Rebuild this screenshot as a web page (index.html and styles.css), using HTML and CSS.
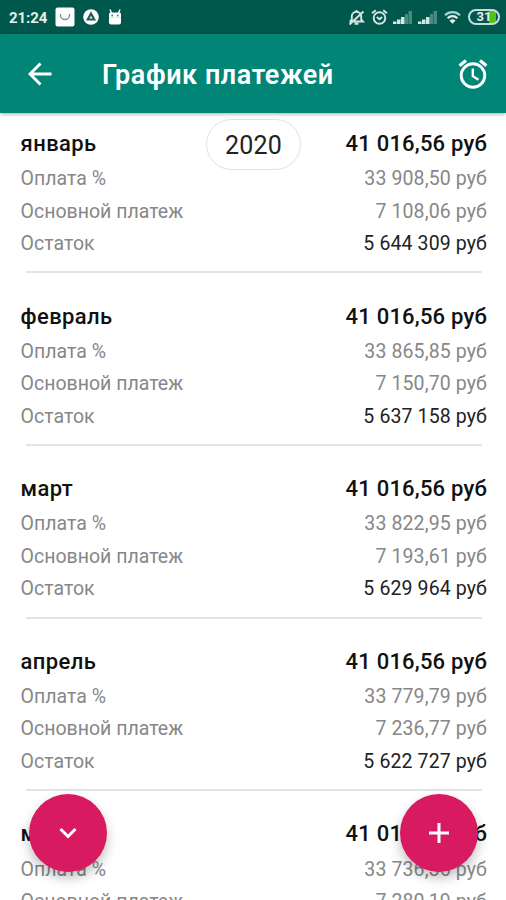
FILE: index.html
```html
<!DOCTYPE html>
<html lang="ru">
<head>
    <meta charset="UTF-8">
    <meta name="viewport" content="width=device-width, initial-scale=1.0">
    <title>График платежей</title>
    <link rel="stylesheet" href="styles.css">
</head>
<body>
    <div class="status-bar">
        <span class="time">21:24</span>
        <svg class="app-icon" width="20" height="20" viewBox="0 0 20 20">
            <rect x="0.5" y="0.5" width="19" height="19" rx="2" fill="#fff"/>
            <path d="M5.5 7v1a4.5 4.5 0 0 0 9 0v-1" fill="none" stroke="#71958f" stroke-width="1.3"/>
        </svg>
        <svg class="app-icon" width="16" height="16" viewBox="0 0 16 16">
            <circle cx="8" cy="8" r="7.8" fill="#fff"/>
            <path d="M8 4.5L11.2 10.5H4.8z" fill="none" stroke="#225f54" stroke-width="2.2"/>
        </svg>
        <svg class="app-icon" width="14" height="17" viewBox="0 0 14 17">
            <path d="M1 5c0-1 1-1.5 2-1.5h8c1 0 2 .5 2 1.5v8.5a2 2 0 0 1-2 2H3a2 2 0 0 1-2-2z" fill="#fff"/>
            <path d="M2 .5l1.5 3.5M12 .5L10.5 4" stroke="#fff" stroke-width="1.4"/>
            <path d="M1 8.5h12" stroke="#d5e2e0" stroke-width="0.6"/>
            <circle cx="4.2" cy="6.5" r="0.9" fill="#4b7e76"/>
            <circle cx="9.8" cy="6.5" r="0.9" fill="#4b7e76"/>
        </svg>
        <div class="indicators">
            <svg width="17" height="17" viewBox="0 0 17 17" fill="none" stroke="#d7e5e3" stroke-width="1.9">
                <path d="M1.5 12.5h13.5l-1.8-2.2V7.5a4.7 4.7 0 0 0-9.4 0v2.8L2 12.5M8.5 1v2M6.5 14.8h4M1.5 15.5l14-13"/>
            </svg>
            <svg class="status-alarm" width="17" height="17" viewBox="0 0 17 17" fill="none" stroke="#d7e5e3" stroke-width="1.9">
                <circle cx="8.5" cy="9" r="5.8"/>
                <path d="M1 4.2l3.8-3M16 4.2l-3.8-3M5.8 8l2.7 2.3L11.2 8"/>
            </svg>
            <svg width="19" height="14" viewBox="0 0 19 14" fill="#d7e5e3">
                <path d="M0 11.5h3.5V14H0zM4 9.5h3.5V14H4zM8 7h3.5v7H8z"/>
                <path d="M12 4h3v10h-3zM15.5 1H19v13h-3.5z" opacity="0.35"/>
            </svg>
            <svg width="19" height="14" viewBox="0 0 19 14" fill="#d7e5e3">
                <path d="M0 11.5h3.5V14H0zM4 9.5h3.5V14H4zM8 7h3.5v7H8z"/>
                <path d="M12 4h3v10h-3zM15.5 1H19v13h-3.5z" opacity="0.35"/>
            </svg>
            <svg class="wifi" width="17" height="14" viewBox="0 0 17 14" fill="none" stroke="#e4eeec" stroke-width="2.2">
                <path d="M1 5.2a10.8 10.8 0 0 1 15 0" opacity="0.8"/>
                <path d="M3.6 8.2a7 7 0 0 1 9.8 0"/>
                <path d="M5.5 10.7a4.3 4.3 0 0 1 6 0L8.5 13.8z" fill="#e4eeec" stroke="none"/>
            </svg>
            <div class="battery"><span>31</span></div>
        </div>
    </div>

    <div class="toolbar">
        <svg class="back" width="24" height="24" viewBox="0 0 24 24" fill="none" stroke="#fff" stroke-width="2.9">
            <path d="M23.5 12H2M12.5 1.5L2 12l10.5 10.5"/>
        </svg>
        <h1>График платежей</h1>
        <svg class="alarm" width="30" height="30" viewBox="0 0 30 30" fill="none" stroke="#fff">
            <circle cx="15" cy="16.5" r="11.8" stroke-width="2.9"/>
            <path d="M1.5 6.8L8 1.4M28.5 6.8L22 1.4" stroke-width="3.2"/>
            <path d="M14.8 9.5v7.7l5.7 3.5" stroke-width="2.4"/>
        </svg>
    </div>

    <div class="schedule">
        <div class="year">2020</div>
        <div class="payment">
            <div class="row total"><span>январь</span><span>41 016,56 руб</span></div>
            <div class="row"><span>Оплата %</span><span>33 908,50 руб</span></div>
            <div class="row"><span>Основной платеж</span><span>7 108,06 руб</span></div>
            <div class="row rest"><span>Остаток</span><span>5 644 309 руб</span></div>
        </div>
        <div class="payment">
            <div class="row total"><span>февраль</span><span>41 016,56 руб</span></div>
            <div class="row"><span>Оплата %</span><span>33 865,85 руб</span></div>
            <div class="row"><span>Основной платеж</span><span>7 150,70 руб</span></div>
            <div class="row rest"><span>Остаток</span><span>5 637 158 руб</span></div>
        </div>
        <div class="payment">
            <div class="row total"><span>март</span><span>41 016,56 руб</span></div>
            <div class="row"><span>Оплата %</span><span>33 822,95 руб</span></div>
            <div class="row"><span>Основной платеж</span><span>7 193,61 руб</span></div>
            <div class="row rest"><span>Остаток</span><span>5 629 964 руб</span></div>
        </div>
        <div class="payment">
            <div class="row total"><span>апрель</span><span>41 016,56 руб</span></div>
            <div class="row"><span>Оплата %</span><span>33 779,79 руб</span></div>
            <div class="row"><span>Основной платеж</span><span>7 236,77 руб</span></div>
            <div class="row rest"><span>Остаток</span><span>5 622 727 руб</span></div>
        </div>
        <div class="payment">
            <div class="row total"><span>май</span><span>41 016,56 руб</span></div>
            <div class="row"><span>Оплата %</span><span>33 736,36 руб</span></div>
            <div class="row"><span>Основной платеж</span><span>7 280,19 руб</span></div>
        </div>
    </div>

    <button class="fab fab-down">
        <svg width="18" height="12" viewBox="0 0 18 12" fill="none" stroke="#fff" stroke-width="3">
            <path d="M1.5 2L9 9.5 16.5 2"/>
        </svg>
    </button>
    <button class="fab fab-add">
        <svg width="22" height="22" viewBox="0 0 22 22" fill="none" stroke="#fff" stroke-width="3">
            <path d="M11 1v20M1 11h20"/>
        </svg>
    </button>
</body>
</html>
```
FILE: styles.css
```css
body {
    margin: 0;
    height: 900px;
    display: flex;
    flex-direction: column;
    overflow: hidden;
    position: relative;
    background-color: #fff;
    font-family: Roboto, sans-serif;
}
.status-bar {
    flex: none;
    box-sizing: border-box;
    height: 34px;
    display: flex;
    align-items: center;
    padding: 0 6px 0 9px;
    background-color: #00574b;
    color: #e6efed;
}
.time {
    width: 46px;
    padding-top: 2px;
    font-size: 15px;
    font-weight: 700;
    letter-spacing: -0.1px;
}
.app-icon {
    margin-right: 7.5px;
}
.app-icon + .app-icon + .app-icon {
    margin-left: 2px;
}
.indicators {
    display: flex;
    align-items: center;
    gap: 6px;
    margin-left: auto;
}
.status-alarm {
    margin-right: -1px;
}
.wifi {
    margin: 0 1px 0 1px;
}
.battery {
    box-sizing: border-box;
    width: 32px;
    height: 16px;
    border: 2px solid #c9dbd8;
    border-radius: 8px;
    background: linear-gradient(to right, transparent 19px, #4fc21c 19px, #4fc21c 26px, transparent 26px);
    font-size: 13px;
    font-weight: 700;
    line-height: 12px;
    text-align: center;
}
.toolbar {
    flex: none;
    box-sizing: border-box;
    height: 79px;
    display: flex;
    align-items: center;
    padding: 0 18px 0 28px;
    background-color: #008577;
    box-shadow: 0 1px 4px rgba(0, 0, 0, 0.35);
    z-index: 1;
}
h1 {
    flex: 1;
    margin: 3px 0 0 50px;
    color: #fff;
    font-size: 27px;
    font-weight: 600;
    line-height: 32px;
    letter-spacing: 0.55px;
}
.schedule {
    flex: 1;
    min-height: 0;
    overflow: hidden;
    position: relative;
}
.year {
    position: absolute;
    top: 6px;
    left: 206px;
    box-sizing: border-box;
    width: 95px;
    height: 51px;
    border: 1.5px solid #e2dfdf;
    border-radius: 26px;
    background-color: #fff;
    color: #222;
    font-size: 25px;
    line-height: 52px;
    letter-spacing: 0.2px;
    text-align: center;
}
.payment {
    padding: 13.2px 19px 0 20.6px;
}
.payment::after {
    content: "";
    display: block;
    height: 2px;
    margin: 11.9px 5px 12.1px 5.4px;
    background-color: #e4e4e4;
}
.row {
    display: flex;
    justify-content: space-between;
    height: 32.4px;
    color: #878787;
    font-size: 19.5px;
    line-height: 33px;
}
.row span:last-child {
    letter-spacing: 0.12px;
}
.total {
    height: 36.2px;
    color: #111;
    font-size: 22px;
    font-weight: 500;
    line-height: 36px;
    letter-spacing: 0.4px;
}
.total span:last-child {
    letter-spacing: 0.2px;
}
.rest span:last-child {
    color: #222;
}
.fab {
    position: absolute;
    top: 794px;
    width: 78px;
    height: 78px;
    display: flex;
    justify-content: center;
    align-items: center;
    padding: 0;
    border: none;
    border-radius: 50%;
    background-color: #d81b60;
    box-shadow: 0 6px 12px rgba(0, 0, 0, 0.25);
}
.fab-down {
    left: 29px;
}
.fab-add {
    left: 400px;
}
```
